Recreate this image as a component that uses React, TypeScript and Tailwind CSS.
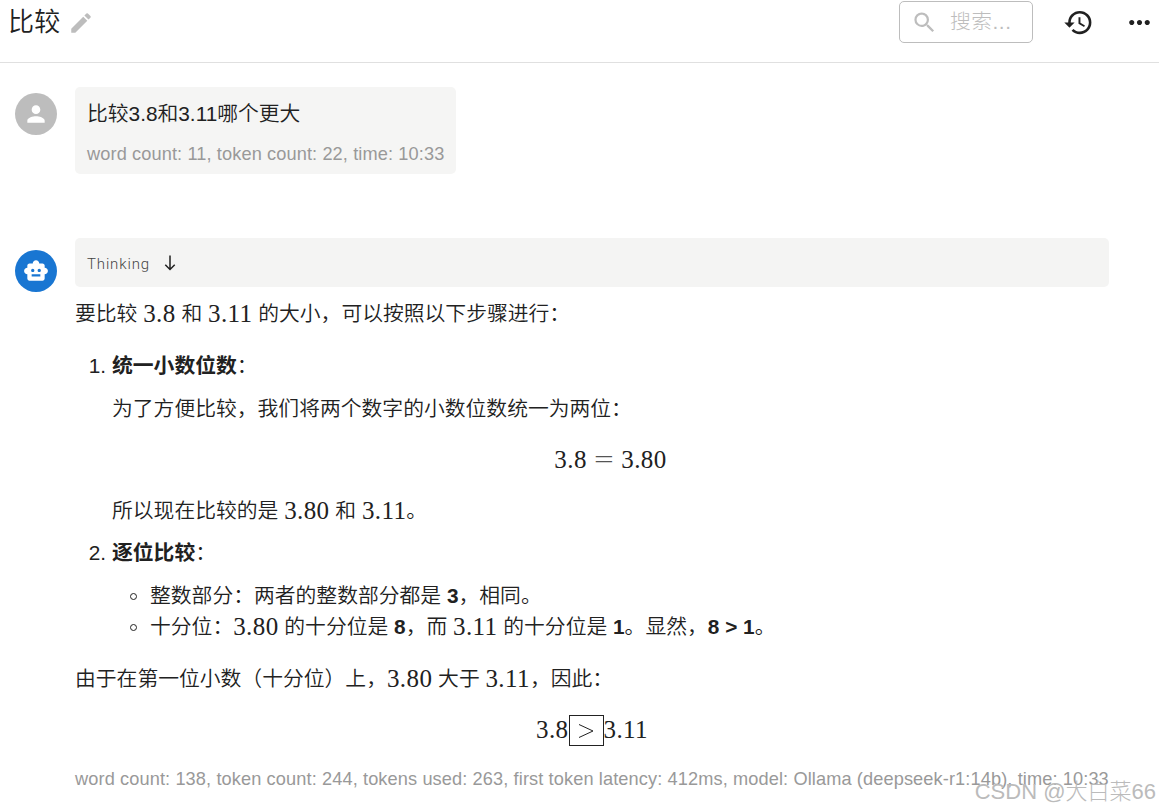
import type { ReactNode } from "react"
import { MdEdit, MdHistory, MdMoreHoriz, MdPerson, MdSearch, MdSmartToy, MdSouth } from "react-icons/md"

function Num({ children }: { children: ReactNode }) {
  return (
    <span className="align-[-1px] font-['Liberation_Serif','Noto_Serif',serif] text-[25px] leading-none tracking-[0.4px]">
      {children}
    </span>
  )
}

function Row({ className = "", children }: { className?: string; children: ReactNode }) {
  return <div className={`h-[31px] leading-[31px] whitespace-pre ${className}`}>{children}</div>
}

function Header() {
  return (
    <header className="flex h-[63px] items-start border-b border-[#e0e0e0]">
      <h1 className="ml-[8px] h-[45px] text-[26px] leading-[45px] font-[350] tracking-[0.3px]">比较</h1>
      <MdEdit className="mt-[10px] ml-[7px] size-[26px] text-[#bdbdbd]" />
      <div className="mt-px ml-auto flex h-[42px] w-[134px] items-center rounded-[5px] border border-[#bdbdbd] pl-[11px] text-[#bdbdbd]">
        <MdSearch className="size-[27px]" />
        <span className="ml-[12px] text-[20.8px] font-light tracking-[0.5px]">搜索...</span>
      </div>
      <MdHistory className="mt-[7px] ml-[30px] size-[31px]" />
      <MdMoreHoriz className="mt-[7px] mr-[4px] ml-[30px] size-[31px]" />
    </header>
  )
}

function UserMessage() {
  return (
    <section className="mt-[24px] ml-[15px] flex items-start">
      <div className="mt-[6px] flex size-[42px] items-center justify-center rounded-full bg-[#bdbdbd] text-white">
        <MdPerson className="size-[26px]" />
      </div>
      <div className="ml-[18px] h-[87px] w-[381px] rounded-[5px] bg-[#f5f5f4] px-[12px] pt-[11px]">
        <Row>比较3.8和3.11哪个更大</Row>
        <div className="mt-[11px] text-[18.2px] leading-[28px] tracking-[0.11px] whitespace-pre text-[#999]">
          word count: 11, token count: 22, time: 10:33
        </div>
      </div>
    </section>
  )
}

function Answer() {
  return (
    <div className="mt-[11px]">
      <Row>要比较 <Num>3.8</Num> 和 <Num>3.11</Num> 的大小，可以按照以下步骤进行：</Row>

      <div className="pl-[37px]">
        <Row className="relative mt-[21px]">
          <span className="absolute right-full mr-[6px]">1.</span>
          <b className="font-bold">统一小数位数</b>：
        </Row>
        <Row className="mt-[12px]">为了方便比较，我们将两个数字的小数位数统一为两位：</Row>
        <Row className="mt-[20px] text-center">
          <Num>3.8<span className="mx-[10px] inline-block scale-x-[1.4] font-light text-[#555]">=</span>3.80</Num>
        </Row>
        <Row className="mt-[20px]">所以现在比较的是 <Num>3.80</Num> 和 <Num>3.11</Num>。</Row>
        <Row className="relative mt-[11px]">
          <span className="absolute right-full mr-[6px]">2.</span>
          <b className="font-bold">逐位比较</b>：
        </Row>
        <ul className="mt-[12px] pl-[38px]">
          <li className="relative">
            <span className="absolute top-[13px] -left-[20px] size-[7px] rounded-full border border-[#222]" />
            <Row>整数部分：两者的整数部分都是 <b className="font-bold">3</b>，相同。</Row>
          </li>
          <li className="relative">
            <span className="absolute top-[13px] -left-[20px] size-[7px] rounded-full border border-[#222]" />
            <Row>十分位：<Num>3.80</Num> 的十分位是 <b className="font-bold">8</b>，而 <Num>3.11</Num> 的十分位是 <b className="font-bold">1</b>。显然，<b className="font-bold">8 &gt; 1</b>。</Row>
          </li>
        </ul>
      </div>

      <Row className="mt-[21px]">由于在第一位小数（十分位）上，<Num>3.80</Num> 大于 <Num>3.11</Num>，因此：</Row>
      <div className="mt-[20px] flex h-[31px] items-center justify-center">
        <Num>3.8</Num>
        <span className="mt-[2px] flex h-[31px] w-[35px] shrink-0 items-center justify-center border border-[#222]">
          <svg viewBox="0 0 16 16" className="size-[16px]" fill="none" stroke="currentColor">
            <path d="M1 1.5 15 8 1 14.5" />
          </svg>
        </span>
        <Num>3.11</Num>
      </div>
    </div>
  )
}

function BotMessage() {
  return (
    <section className="mt-[64px] ml-[15px] flex items-start">
      <div className="mt-[12px] flex size-[42px] items-center justify-center rounded-full bg-[#1976d2] text-white">
        <MdSmartToy className="size-[26px]" />
      </div>
      <div className="ml-[18px] w-[1034px]">
        <div className="flex h-[49px] items-center rounded-[5px] bg-[#f4f4f3] pl-[12px]">
          <span className="w-[74px] pt-[3px] font-[Roboto,sans-serif] text-[15px] font-light tracking-[0.85px] text-[#444]">Thinking</span>
          <MdSouth className="size-[18px]" />
        </div>
        <Answer />
        <div className="mt-[20px] text-[18.2px] leading-[28px] tracking-[0.11px] whitespace-pre text-[#999]">
          word count: 138, token count: 244, tokens used: 263, first token latency: 412ms, model: Ollama (deepseek-r1:14b), time: 10:33
        </div>
      </div>
    </section>
  )
}

export default function App() {
  return (
    <main className="relative h-[812px] w-[1159px] overflow-hidden bg-white font-['Liberation_Sans','Noto_Sans_CJK_SC',sans-serif] text-[20.8px] font-[350] text-[#212121]">
      <Header />
      <UserMessage />
      <BotMessage />
      <div className="absolute right-[3px] bottom-[5px] text-[22px] leading-[30px] font-light whitespace-pre text-[#bbb]">
        CSDN @大白菜66
      </div>
    </main>
  )
}
